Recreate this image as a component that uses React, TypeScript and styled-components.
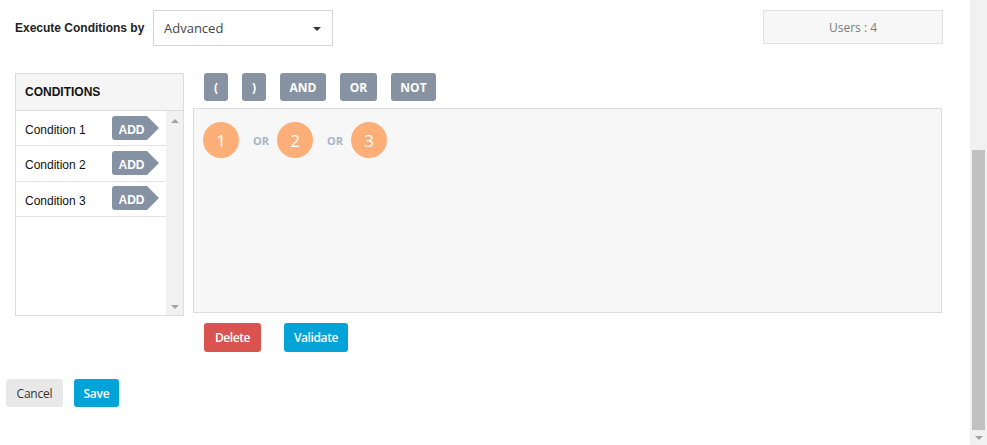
import styled, { createGlobalStyle } from "styled-components";

const GlobalStyle = createGlobalStyle`
  html, body {
    margin: 0;
    padding: 0;
    background: #ffffff;
    overflow: hidden;
  }
  body {
    font-family: "Open Sans", "Liberation Sans", Arial, sans-serif;
    color: #333;
  }
`;

const Page = styled.div`
  display: flex;
  width: 987px;
  height: 445px;
`;

const Main = styled.div`
  flex: 1;
  display: flex;
  flex-direction: column;
`;

const TopRow = styled.div`
  display: flex;
  align-items: flex-start;
  padding: 10px 27px 0 15px;
`;

const Label = styled.div`
  width: 138px;
  height: 36px;
  display: flex;
  align-items: center;
  font: bold 12px "Liberation Sans", Arial, sans-serif;
  color: #222;
`;

const Select = styled.div`
  box-sizing: border-box;
  width: 180px;
  height: 36px;
  border: 1px solid #d6d6d6;
  display: flex;
  align-items: center;
  justify-content: space-between;
  padding: 0 11px 0 10px;
  font-size: 13px;
  color: #444;
`;

const Caret = styled.span`
  width: 0;
  height: 0;
  border-left: 4px solid transparent;
  border-right: 4px solid transparent;
  border-top: 4px solid #333;
  margin-top: 2px;
`;

const Spacer = styled.div`
  flex: 1;
`;

const UsersBox = styled.div`
  box-sizing: border-box;
  width: 180px;
  height: 34px;
  background: #f7f7f7;
  border: 1px solid #e2e2e2;
  display: flex;
  align-items: center;
  justify-content: center;
  font-size: 12px;
  color: #7a7a7a;
`;

const Body = styled.div`
  display: flex;
  align-items: flex-start;
  margin-top: 27px;
  padding-left: 15px;
`;

const Panel = styled.div`
  box-sizing: border-box;
  width: 169px;
  height: 243px;
  border: 1px solid #dcdcdc;
  display: flex;
  flex-direction: column;
`;

const PanelHeader = styled.div`
  height: 36px;
  background: #f5f5f5;
  border-bottom: 1px solid #dcdcdc;
  display: flex;
  align-items: center;
  padding-left: 9px;
  font: bold 12px "Liberation Sans", Arial, sans-serif;
  color: #111;
`;

const PanelList = styled.div`
  flex: 1;
  display: flex;
`;

const Rows = styled.div`
  flex: 1;
`;

const Row = styled.div`
  box-sizing: border-box;
  height: 35.3px;
  border-bottom: 1px solid #e3e3e3;
  display: flex;
  align-items: center;
  justify-content: space-between;
  padding: 4px 7px 0 9px;
  font: 12px "Liberation Sans", Arial, sans-serif;
  color: #111;
`;

const AddTag = styled.span`
  position: relative;
  box-sizing: border-box;
  width: 35px;
  height: 24px;
  margin-right: 12px;
  margin-top: -5px;
  background: #8592a3;
  border-radius: 3px 0 0 3px;
  color: #fff;
  font: bold 12px "Liberation Sans", Arial, sans-serif;
  display: flex;
  align-items: flex-end;
  justify-content: center;
  padding: 0 0 3px 4px;

  &::after {
    content: "";
    position: absolute;
    left: 35px;
    top: 0;
    border-left: 12px solid #8592a3;
    border-top: 12px solid transparent;
    border-bottom: 12px solid transparent;
  }
`;

const InnerTrack = styled.div`
  width: 17px;
  background: #f1f1f1;
  display: flex;
  flex-direction: column;
  justify-content: space-between;
  align-items: center;
  padding: 8px 0 6px;
`;

const Arrow = styled.span<{ $down?: boolean }>`
  width: 0;
  height: 0;
  border-left: 4px solid transparent;
  border-right: 4px solid transparent;
  ${(p) => (p.$down ? "border-top: 4px solid #a3a3a3;" : "border-bottom: 4px solid #a3a3a3;")}
`;

const RightCol = styled.div`
  margin-left: 9px;
  width: 749px;
  display: flex;
  flex-direction: column;
`;

const OperatorBar = styled.div`
  display: flex;
  gap: 14px;
  padding-left: 11px;
`;

const OpButton = styled.button<{ $w: number }>`
  width: ${(p) => p.$w}px;
  height: 28px;
  border: none;
  border-radius: 3px;
  background: #8793a3;
  color: #fff;
  font: bold 12px "Open Sans", "Liberation Sans", sans-serif;
  padding: 0;
`;

const ExprBox = styled.div`
  box-sizing: border-box;
  margin-top: 7px;
  height: 205px;
  background: #f7f7f7;
  border: 1px solid #dcdcdc;
  display: flex;
  align-items: center;
  align-content: flex-start;
  flex-wrap: wrap;
  padding: 13px 0 0 9px;
`;

const Token = styled.div`
  width: 36px;
  height: 36px;
  border-radius: 50%;
  background: #fdaf77;
  color: #fff;
  font-size: 17px;
  display: flex;
  align-items: center;
  justify-content: center;
`;

const OrText = styled.span`
  margin: 0 8px 0 14px;
  font: bold 11px "Open Sans", "Liberation Sans", sans-serif;
  color: #a6b5c6;
`;

const ActionRow = styled.div`
  display: flex;
  gap: 23px;
  margin-top: 10px;
  padding-left: 11px;
`;

const ActionButton = styled.button<{ $bg: string; $w: number }>`
  width: ${(p) => p.$w}px;
  height: 29px;
  border: none;
  border-radius: 3px;
  background: ${(p) => p.$bg};
  color: #fff;
  font: 600 12px "Open Sans", "Liberation Sans", sans-serif;
  letter-spacing: -0.4px;
  padding: 0;
`;

const Footer = styled.div`
  display: flex;
  gap: 11px;
  margin-top: 27px;
  padding-left: 6px;
`;

const FooterButton = styled.button<{ $primary?: boolean; $w: number }>`
  width: ${(p) => p.$w}px;
  height: 28px;
  border: none;
  border-radius: 3px;
  background: ${(p) => (p.$primary ? "#02a3d8" : "#e8e8e8")};
  color: ${(p) => (p.$primary ? "#fff" : "#333")};
  font: ${(p) => (p.$primary ? "600" : "400")} 12px "Open Sans", "Liberation Sans", sans-serif;
  letter-spacing: -0.2px;
  padding: 0;
`;

const PageTrack = styled.div`
  width: 17px;
  background: #f1f1f1;
  display: flex;
  flex-direction: column;
  align-items: center;
  padding: 150px 0 4px;
  box-sizing: border-box;
`;

const Thumb = styled.div`
  width: 13px;
  height: 280px;
  background: #c1c1c1;
`;

const BottomArrow = styled.span`
  margin-top: 6px;
  width: 0;
  height: 0;
  border-left: 4px solid transparent;
  border-right: 4px solid transparent;
  border-top: 4px solid #a3a3a3;
`;

const conditions = ["Condition 1", "Condition 2", "Condition 3"];
const operators = [
  { label: "(", w: 24 },
  { label: ")", w: 24 },
  { label: "AND", w: 46 },
  { label: "OR", w: 37 },
  { label: "NOT", w: 45 },
];

export default function App() {
  return (
    <>
      <GlobalStyle />
      <Page>
        <Main>
          <TopRow>
            <Label>Execute Conditions by</Label>
            <Select>
              Advanced
              <Caret />
            </Select>
            <Spacer />
            <UsersBox>Users : 4</UsersBox>
          </TopRow>

          <Body>
            <Panel>
              <PanelHeader>CONDITIONS</PanelHeader>
              <PanelList>
                <Rows>
                  {conditions.map((c) => (
                    <Row key={c}>
                      {c}
                      <AddTag>ADD</AddTag>
                    </Row>
                  ))}
                </Rows>
                <InnerTrack>
                  <Arrow />
                  <Arrow $down />
                </InnerTrack>
              </PanelList>
            </Panel>

            <RightCol>
              <OperatorBar>
                {operators.map((o) => (
                  <OpButton key={o.label} $w={o.w}>
                    {o.label}
                  </OpButton>
                ))}
              </OperatorBar>
              <ExprBox>
                <Token>1</Token>
                <OrText>OR</OrText>
                <Token>2</Token>
                <OrText>OR</OrText>
                <Token>3</Token>
              </ExprBox>
              <ActionRow>
                <ActionButton $bg="#d9534f" $w={57}>
                  Delete
                </ActionButton>
                <ActionButton $bg="#03a3d8" $w={64}>
                  Validate
                </ActionButton>
              </ActionRow>
            </RightCol>
          </Body>

          <Footer>
            <FooterButton $w={57}>Cancel</FooterButton>
            <FooterButton $primary $w={45}>
              Save
            </FooterButton>
          </Footer>
        </Main>
        <PageTrack>
          <Thumb />
          <BottomArrow />
        </PageTrack>
      </Page>
    </>
  );
}
